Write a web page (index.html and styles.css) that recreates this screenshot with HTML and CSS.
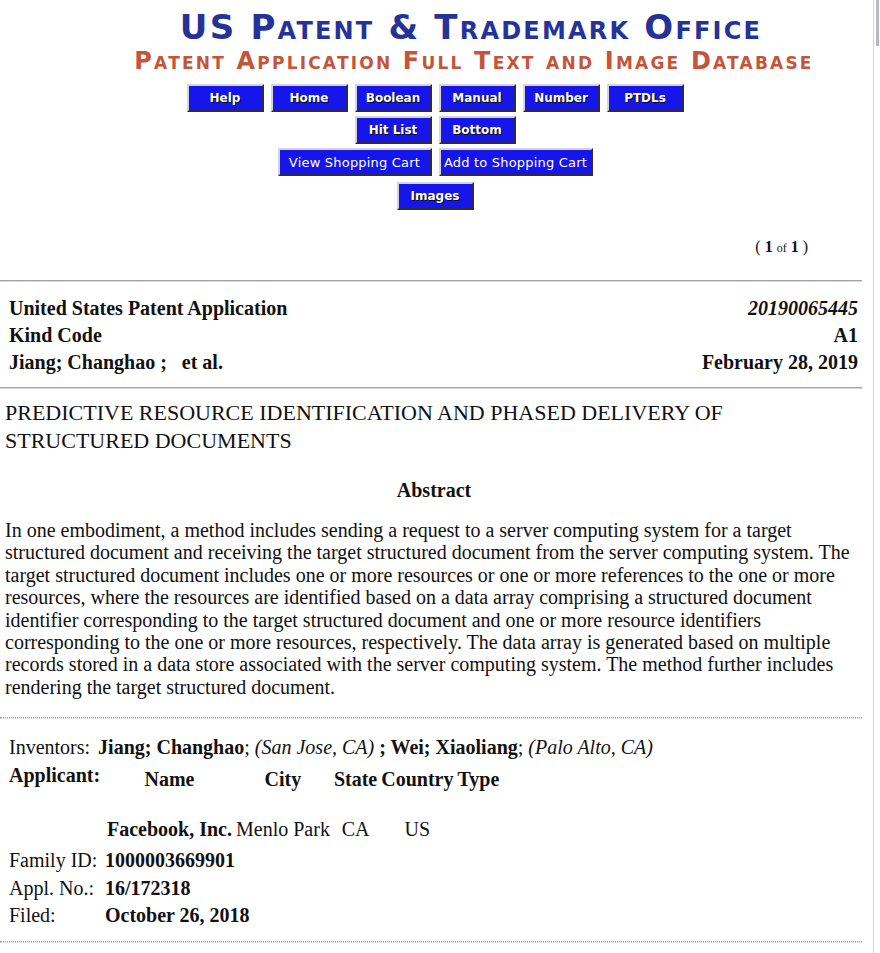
FILE: index.html
```html
<!DOCTYPE html>
<html lang="en">
<head>
<meta charset="utf-8">
<title>United States Patent Application: 0190065445</title>
<link rel="stylesheet" href="styles.css">
</head>
<body>
<div class="page">
  <header class="banner">
    <div class="banner-title">US Patent &amp; Trademark Office</div>
    <div class="banner-sub">Patent Application Full Text and Image Database</div>
  </header>

  <nav class="nav">
    <div class="nav-row">
      <a class="btn">Help</a>
      <a class="btn">Home</a>
      <a class="btn">Boolean</a>
      <a class="btn">Manual</a>
      <a class="btn">Number</a>
      <a class="btn">PTDLs</a>
    </div>
    <div class="nav-row">
      <a class="btn">Hit List</a>
      <a class="btn">Bottom</a>
    </div>
    <div class="nav-row">
      <a class="btn btn-cart">View Shopping Cart</a>
      <a class="btn btn-cart">Add to Shopping Cart</a>
    </div>
    <div class="nav-row nav-row-images">
      <a class="btn">Images</a>
    </div>
  </nav>

  <div class="pager">( <b>1</b> <span class="of">of</span> <b>1</b> )</div>

  <hr class="rule">

  <table class="meta">
    <tr><td class="lft"><b>United States Patent Application</b></td><td class="rgt"><b><i>20190065445</i></b></td></tr>
    <tr><td class="lft"><b>Kind Code</b></td><td class="rgt"><b>A1</b></td></tr>
    <tr><td class="lft"><b>Jiang; Changhao ; &nbsp; et al.</b></td><td class="rgt"><b>February 28, 2019</b></td></tr>
  </table>

  <hr class="rule">

  <h1 class="title">PREDICTIVE RESOURCE IDENTIFICATION AND PHASED DELIVERY OF STRUCTURED DOCUMENTS</h1>

  <h2 class="abstract-head">Abstract</h2>

  <p class="abstract">In one embodiment, a method includes sending a request to a server computing system for a target structured document and receiving the target structured document from the server computing system. The target structured document includes one or more resources or one or more references to the one or more resources, where the resources are identified based on a data array comprising a structured document identifier corresponding to the target structured document and one or more resource identifiers corresponding to the one or more resources, respectively. The data array is generated based on multiple records stored in a data store associated with the server computing system. The method further includes rendering the target structured document.</p>

  <hr class="rule rule-dotted">

  <div class="inventors"><span class="inv-label">Inventors:</span> <b>Jiang; Changhao</b>; <i>(San Jose, CA)</i> <b>; Wei; Xiaoliang</b>; <i>(Palo Alto, CA)</i></div>

  <div class="applicant">
    <div class="applicant-label">Applicant:</div>
    <table class="applicant-table">
      <tr><th>Name</th><th>City</th><th>State</th><th>Country</th><th>Type</th></tr>
      <tr class="applicant-row"><td><b>Facebook, Inc.</b></td><td>Menlo Park</td><td>CA</td><td>US</td><td></td></tr>
    </table>
  </div>

  <table class="ids">
    <tr><td class="id-label">Family ID:</td><td><b>1000003669901</b></td></tr>
    <tr><td class="id-label">Appl. No.:</td><td><b>16/172318</b></td></tr>
    <tr><td class="id-label">Filed:</td><td><b>October 26, 2018</b></td></tr>
  </table>

  <hr class="rule rule-dotted">
</div>

<div class="scrollbar"><div class="scroll-thumb"></div></div>
</body>
</html>
```

FILE: styles.css
```css
html, body {
  margin: 0;
  padding: 0;
  background: #ffffff;
}

body {
  font-family: "Liberation Serif", "Times New Roman", serif;
  font-size: 20px;
  color: #111111;
}

.page {
  width: 862px;
}

/* ---------- banner ---------- */
.banner {
  padding: 9px 0 0 80px;
  text-align: center;
  font-family: "DejaVu Sans", "Liberation Sans", sans-serif;
  font-weight: bold;
  font-variant: small-caps;
}

.banner-title {
  color: #25329a;
  font-size: 34px;
  line-height: 36px;
  letter-spacing: 2.2px;
}

.banner-sub {
  color: #c4553a;
  font-size: 24px;
  line-height: 32px;
  letter-spacing: 2.2px;
  padding-left: 6px;
}

/* ---------- nav buttons ---------- */
.nav {
  padding: 7px 0 0 8px;
  display: flex;
  flex-direction: column;
  align-items: center;
  gap: 4px;
}

.nav-row {
  display: flex;
  gap: 7px;
}

.nav-row-images {
  margin-top: 2px;
}

.btn {
  box-sizing: border-box;
  width: 77px;
  height: 28px;
  display: flex;
  align-items: center;
  justify-content: center;
  background: #1616ea;
  border-top: 2px solid #d4d4dc;
  border-left: 2px solid #d4d4dc;
  border-right: 2px solid #2a2a50;
  border-bottom: 2px solid #2a2a50;
  color: #ffffff;
  font-family: "DejaVu Sans", "Liberation Sans", sans-serif;
  font-weight: bold;
  font-size: 12px;
  text-shadow: 1px 1px 0 #000000;
  text-decoration: none;
}

.btn-cart {
  width: 154px;
  font-weight: normal;
  font-size: 13px;
  text-shadow: none;
  letter-spacing: 0.2px;
}

/* ---------- pager ---------- */
.pager {
  text-align: right;
  padding: 28px 54px 0 0;
  font-size: 16px;
  line-height: 18px;
}

.pager .of {
  font-size: 12px;
}

/* ---------- rules ---------- */
.rule {
  margin: 0;
  height: 0;
  border: 0;
  border-top: 1px solid #a4a4a8;
  border-bottom: 1px solid #d8d8dc;
}

.pager + .rule {
  margin-top: 23px;
}

.rule-dotted {
  border-top: 1px dotted #9a9aa0;
  border-bottom: 1px dotted #c8c8cc;
}

/* ---------- meta table ---------- */
.meta {
  width: 100%;
  border-collapse: collapse;
  margin: 13px 0 11px;
}

.meta td {
  padding: 0 4px 0 9px;
  height: 27px;
  line-height: 27px;
}

.meta .rgt {
  text-align: right;
}

/* ---------- title ---------- */
.title {
  margin: 10px 0 0;
  padding-left: 5px;
  font-size: 22px;
  font-weight: normal;
  line-height: 28px;
}

.abstract-head {
  margin: 24px 0 0;
  text-align: center;
  font-size: 20px;
  line-height: 22px;
  padding-left: 6px;
}

.abstract {
  margin: 18px 0 19px;
  padding: 0 4px 0 5px;
  font-size: 20px;
  line-height: 22.4px;
}

/* ---------- inventors / applicant ---------- */
.inventors {
  padding: 16px 0 0 9px;
  line-height: 24px;
}

.inv-label {
  margin-right: 3px;
}

.applicant {
  display: flex;
  padding: 5px 0 0 9px;
}

.applicant-label {
  font-weight: bold;
  width: 96px;
  line-height: 22px;
}

.applicant-table {
  border-collapse: collapse;
  margin-top: 4px;
}

.applicant-table th {
  padding: 0 2px;
  line-height: 22px;
}

.applicant-table td {
  padding: 0 2px;
  line-height: 22px;
  text-align: center;
}

.applicant-table td:first-child {
  text-align: left;
}

.applicant-row td {
  padding-top: 28px;
}

.ids {
  border-collapse: collapse;
  margin: 7px 0 11px 9px;
}

.ids td {
  padding: 0;
  height: 27.5px;
  line-height: 27.5px;
}

.ids .id-label {
  width: 96px;
}

/* ---------- scrollbar strip ---------- */
.scrollbar {
  position: fixed;
  top: 0;
  right: 0;
  width: 6px;
  height: 100%;
  border-left: 1px solid #d4d4da;
  background: #ffffff;
}

.scroll-thumb {
  margin-left: 2px;
  width: 3px;
  height: 46px;
  background: #b8b8c8;
}
```
